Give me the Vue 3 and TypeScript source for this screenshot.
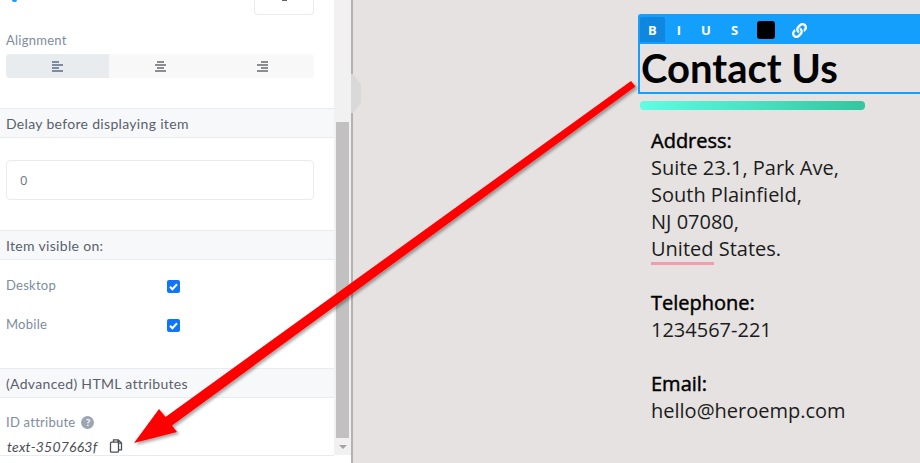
<script setup lang="ts">
const toolbarItems = ['B', 'I', 'U', 'S']
const alignments = ['left', 'center', 'right']
const barWidths = [7, 11, 7, 11]
const address = ['Suite 23.1, Park Ave,', 'South Plainfield,', 'NJ 07080,']

const barX = (align: string, w: number) => {
  if (align === 'left') return 0
  return align === 'right' ? 11 - w : (11 - w) / 2
}
</script>

<template>
  <div class="page">
    <aside class="panel">
      <div class="panel__scroll">
        <div class="clipped-row">
          <span class="clipped-row__dot"></span>
          <span class="clipped-row__box"><i></i></span>
        </div>

        <div class="field field--align">
          <label class="label">Alignment</label>
          <div class="segments">
            <button
              v-for="(align, i) in alignments"
              :key="align"
              class="segment"
              :class="{ 'segment--active': i === 0 }"
            >
              <svg width="11" height="11" viewBox="0 0 11 11">
                <rect
                  v-for="(w, row) in barWidths"
                  :key="row"
                  :x="barX(align, w)"
                  :y="row * 3"
                  :width="w"
                  height="2"
                />
              </svg>
            </button>
          </div>
        </div>

        <h3 class="section">Delay before displaying item</h3>
        <div class="field field--delay">
          <div class="input">0</div>
        </div>

        <h3 class="section">Item visible on:</h3>
        <div class="field field--visible">
          <div class="check-row">
            <span class="label">Desktop</span>
            <span class="check">
              <svg width="13" height="13" viewBox="0 0 13 13"><path d="M3 6.800l2.400 2.400L10 4.200" /></svg>
            </span>
          </div>
          <div class="check-row">
            <span class="label">Mobile</span>
            <span class="check">
              <svg width="13" height="13" viewBox="0 0 13 13"><path d="M3 6.800l2.400 2.400L10 4.200" /></svg>
            </span>
          </div>
        </div>

        <h3 class="section">(Advanced) HTML attributes</h3>
        <div class="field field--attr">
          <div class="attr-label">
            <span class="label">ID attribute</span>
            <span class="help">?</span>
          </div>
          <div class="attr-value">
            <em>text-3507663f</em>
            <svg width="14" height="14" viewBox="0 0 14 14" class="copy">
              <path d="M4.500 3V.8h4.700l3.300 3.200v6.800H9.500M9 .8v3.400h3.500" />
              <rect x="1.500" y="3.200" width="8" height="10" rx="1" />
            </svg>
          </div>
        </div>
      </div>
      <div class="scrollbar">
        <span class="scrollbar__thumb"></span>
        <span class="scrollbar__arrow"></span>
      </div>
    </aside>

    <main class="canvas">
      <span class="canvas__handle"></span>
      <div class="content">
        <div class="editor">
          <div class="toolbar">
            <button
              v-for="(item, i) in toolbarItems"
              :key="item"
              class="tool"
              :class="{ 'tool--active': i === 0 }"
            >
              {{ item }}
            </button>
            <span class="swatch"></span>
            <svg class="link" width="15" height="15" viewBox="0 0 512 512">
              <path
                d="M326.612 185.391c59.747 59.809 58.927 155.698.36 214.59-.11.12-.24.25-.36.37l-67.2 67.2c-59.27 59.27-155.699 59.262-214.96 0-59.27-59.26-59.27-155.7 0-214.96l37.106-37.106c9.84-9.84 26.786-3.3 27.294 10.606.648 17.722 3.826 35.527 9.69 52.721 1.986 5.822.567 12.262-3.783 16.612l-13.087 13.087c-28.026 28.026-28.905 73.66-1.155 101.96 28.024 28.579 74.086 28.749 102.325.51l67.2-67.19c28.191-28.191 28.073-73.757 0-101.83-3.701-3.694-7.429-6.564-10.341-8.569a16.037 16.037 0 0 1-6.947-12.606c-.396-10.567 3.348-21.456 11.698-29.806l21.054-21.055c5.521-5.521 14.182-6.199 20.584-1.731a152.482 152.482 0 0 1 20.522 17.197zM467.547 44.449c-59.261-59.262-155.69-59.27-214.96 0l-67.2 67.2c-.12.12-.25.25-.36.37-58.566 58.892-59.387 154.781.36 214.59a152.454 152.454 0 0 0 20.521 17.196c6.402 4.468 15.064 3.789 20.584-1.731l21.054-21.055c8.35-8.35 12.094-19.239 11.698-29.806a16.037 16.037 0 0 0-6.947-12.606c-2.912-2.005-6.64-4.875-10.341-8.569-28.073-28.073-28.191-73.639 0-101.83l67.2-67.19c28.239-28.239 74.3-28.069 102.325.51 27.75 28.3 26.872 73.934-1.155 101.96l-13.087 13.087c-4.35 4.35-5.769 10.79-3.783 16.612 5.864 17.194 9.042 34.999 9.69 52.721.509 13.906 17.454 20.446 27.294 10.606l37.106-37.106c59.271-59.259 59.271-155.699.001-214.959z"
              />
            </svg>
          </div>
          <h1 class="title">Contact Us</h1>
        </div>
        <div class="bar"></div>

        <div class="contact">
          <p class="block">
            <strong>Address:</strong><br />
            <template v-for="line in address" :key="line">{{ line }}<br /></template>
            <span class="misspelled">United</span> States.
          </p>
          <p class="block"><strong>Telephone:</strong><br />1234567-221</p>
          <p class="block"><strong>Email:</strong><br />hello@heroemp.com</p>
        </div>
      </div>
    </main>

    <!-- annotation arrow drawn over the screenshot -->
    <svg class="arrow" width="920" height="463" viewBox="0 0 920 463">
      <defs>
        <filter id="arrow-shadow" x="-5%" y="-5%" width="110%" height="110%">
          <feDropShadow dx="2" dy="2" stdDeviation="1.800" flood-color="#000" flood-opacity="0.35" />
        </filter>
      </defs>
      <path
        d="M631 81 L635.500 86.500 L172 425.500 L177 432 L134 443 L159 409 L165.500 417 Z"
        fill="#fe0000"
        filter="url(#arrow-shadow)"
      />
    </svg>
  </div>
</template>

<style>
html,
body {
  margin: 0;
  overflow: hidden;
}
</style>

<style scoped>
.page {
  position: relative;
  display: flex;
  width: 920px;
  height: 463px;
  overflow: hidden;
  background: #e5e2e1;
}

.panel {
  display: flex;
  flex: 0 0 353px;
  box-sizing: border-box;
  height: 463px;
  background: #fff;
  border-right: 2px solid #b4b2b1;
}

.panel__scroll {
  flex: 0 0 334px;
  height: 463px;
  overflow: hidden;
  font-family: Lato, sans-serif;
}

.clipped-row {
  display: flex;
  justify-content: space-between;
  align-items: flex-end;
  height: 15px;
  padding: 0 20px 0 12px;
}

.clipped-row__dot {
  align-self: flex-start;
  width: 5px;
  height: 2px;
  border-radius: 0 0 3px 3px;
  background: #1a9df0;
}

.clipped-row__box {
  display: flex;
  justify-content: center;
  width: 58px;
  height: 15px;
  border: 1px solid #e9ebee;
  border-top: none;
  border-radius: 0 0 4px 4px;
}

.clipped-row__box i {
  width: 5px;
  height: 2px;
  background: #5c6470;
}

.field {
  padding: 0 20px 0 6px;
}

.field--align {
  padding-top: 16px;
  height: 77px;
  box-sizing: border-box;
  margin-bottom: 16px;
}

.label {
  display: block;
  font-size: 13px;
  line-height: 18px;
  color: #7d8ca0;
  letter-spacing: 0.25px;
}

.segments {
  display: flex;
  height: 24px;
  margin-top: 5px;
  border-radius: 4px;
  overflow: hidden;
  background: #f8f8f9;
}

.segment {
  display: flex;
  flex: 1;
  align-items: center;
  justify-content: center;
  padding: 1px 0 0;
  border: none;
  background: transparent;
}

.segment svg {
  fill: #8b8d91;
}

.segment--active {
  background: #e9ecef;
}

.segment--active svg {
  fill: #7c8da0;
}

.section {
  margin: 0;
  height: 30px;
  padding: 0 6px;
  box-sizing: border-box;
  border-top: 1px solid #e9ebee;
  border-bottom: 1px solid #e9ebee;
  background: #f7f8fa;
  font-size: 14px;
  font-weight: 400;
  line-height: 30px;
  color: #5a5f6e;
  letter-spacing: 0.32px;
}

.field--delay {
  padding-top: 22px;
  height: 92px;
  box-sizing: border-box;
}

.input {
  height: 40px;
  box-sizing: border-box;
  padding-left: 13px;
  border: 1px solid #e9ebee;
  border-radius: 4px;
  font-family: 'Open Sans', sans-serif;
  font-size: 13px;
  line-height: 39px;
  color: #6a7688;
}

.field--visible {
  height: 108px;
  box-sizing: border-box;
  padding-top: 16px;
}

.check-row {
  display: flex;
  align-items: center;
  height: 18px;
  margin-bottom: 21px;
}

.check-row .label {
  width: 161px;
  margin-top: -1px;
}

.check {
  display: flex;
  width: 13px;
  height: 13px;
  margin-top: 2px;
  border-radius: 2px;
  background: #0f75fa;
}

.check path {
  fill: none;
  stroke: #fff;
  stroke-width: 2;
}

.field--attr {
  height: 58px;
  box-sizing: border-box;
  padding-top: 15px;
  border-bottom: 1px solid #e9ebee;
}

.attr-label {
  display: flex;
  align-items: center;
  gap: 6px;
}

.help {
  width: 13px;
  height: 13px;
  border-radius: 50%;
  background: #9ba6b2;
  color: #fff;
  font-size: 10px;
  font-weight: 700;
  line-height: 13px;
  text-align: center;
}

.attr-value {
  display: flex;
  align-items: center;
  gap: 12px;
  height: 18px;
  margin: 6px 0 0 1px;
  font-size: 14px;
  color: #4c4f57;
  letter-spacing: 0.2px;
}

.copy {
  fill: none;
  stroke: #4c4f57;
  stroke-width: 1.300;
}

.copy rect {
  fill: #fff;
}

.scrollbar {
  position: relative;
  flex: 0 0 17px;
  height: 455px;
  background: #f1f1f1;
}

.scrollbar__thumb {
  position: absolute;
  top: 122px;
  left: 2px;
  width: 13px;
  height: 316px;
  background: #c1c1c1;
}

.scrollbar__arrow {
  position: absolute;
  top: 445px;
  left: 5px;
  border-top: 4px solid #a3a3a3;
  border-left: 4px solid transparent;
  border-right: 4px solid transparent;
}

.canvas {
  position: relative;
  flex: 1;
  min-width: 0;
}

/* sits over the panel's right border, so it starts 2px to the left */
.canvas__handle {
  position: absolute;
  top: 74px;
  left: -2px;
  width: 10px;
  height: 39px;
  background: #d9d9d9;
  clip-path: polygon(0 0, 20% 0, 100% 26%, 100% 74%, 20% 100%, 0 100%);
}

.content {
  margin-left: 285px;
  padding-top: 14px;
}

.editor {
  height: 80px;
  box-sizing: border-box;
  border: 2px solid #159ffc;
  border-right: none;
  border-radius: 3px 0 0 0;
}

.toolbar {
  display: flex;
  align-items: center;
  height: 28px;
  background: #159ffc;
}

.tool {
  padding: 0 8px;
  height: 25px;
  margin-right: 4px;
  border: none;
  border-radius: 2px 2px 0 0;
  background: transparent;
  color: #fff;
  font-family: 'Open Sans', sans-serif;
  font-size: 13px;
  font-weight: 700;
}

.tool--active {
  margin-top: -1px;
  background: #1086df;
}

.swatch {
  width: 18px;
  height: 18px;
  margin-left: 7px;
  border-radius: 3px;
  background: #000;
}

.link {
  margin-left: 17px;
  fill: #fff;
}

.title {
  margin: 0 0 0 1px;
  font-family: Lato, sans-serif;
  font-size: 40px;
  font-weight: 700;
  line-height: 48px;
  color: #000;
}

.bar {
  width: 225px;
  height: 9px;
  margin: 7px 0 0 2px;
  border-radius: 4px;
  background: linear-gradient(90deg, #5ffde4, #33c69f);
}

.contact {
  margin: 17px 0 0 13px;
  font-family: 'Open Sans', sans-serif;
  font-size: 20px;
  line-height: 27px;
  color: #1c1c1c;
}

.block {
  margin: 0 0 27px;
}

.block strong {
  font-weight: 400;
  color: #000;
  -webkit-text-stroke: 0.45px #000;
}

.misspelled {
  border-bottom: 3px solid #f29cae;
}

.arrow {
  position: absolute;
  top: 0;
  left: 0;
  pointer-events: none;
}
</style>
